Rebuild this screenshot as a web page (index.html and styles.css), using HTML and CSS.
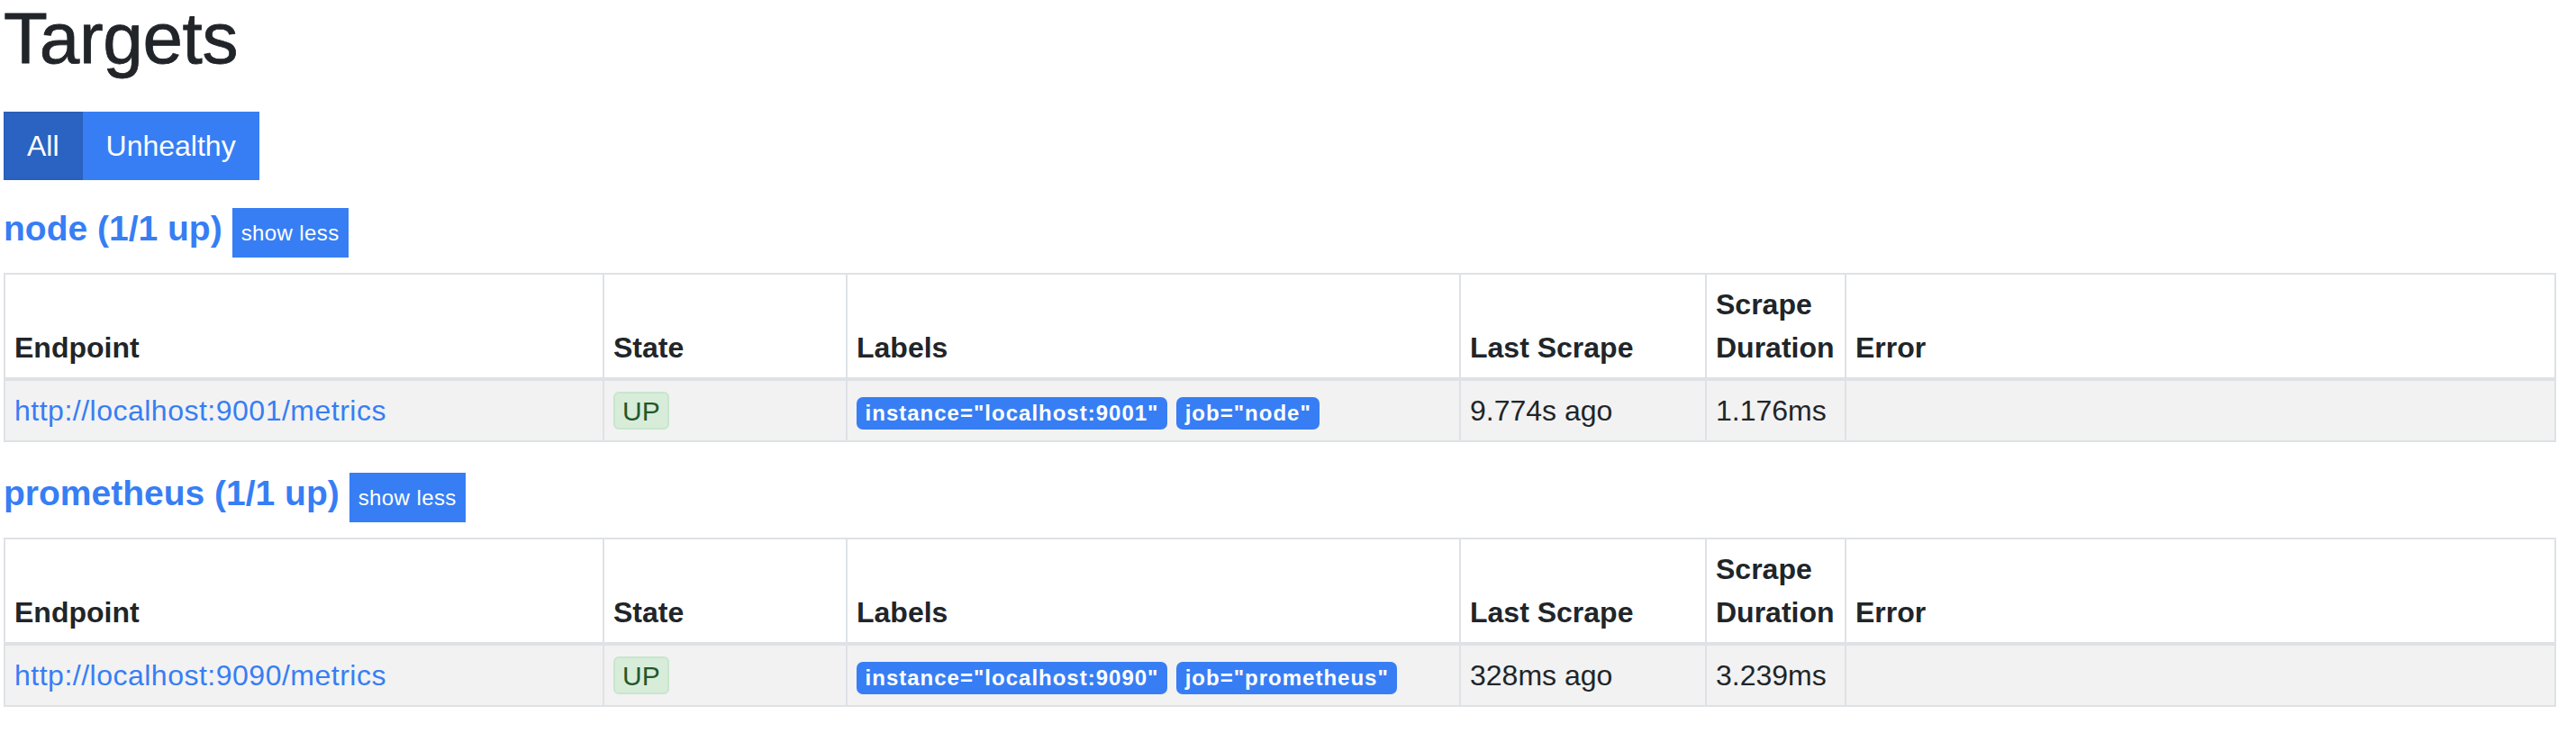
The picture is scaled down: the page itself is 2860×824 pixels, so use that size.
FILE: index.html
```html
<!DOCTYPE html>
<html lang="en">
<head>
<meta charset="utf-8">
<title>Targets</title>
<link rel="stylesheet" href="styles.css">
</head>
<body>
<div class="page">
  <h1 class="title">Targets</h1>
  <div class="filter">
    <button class="fbtn active">All</button><button class="fbtn">Unhealthy</button>
  </div>

  <section class="job">
    <div class="job-head">
      <a class="job-name" href="#">node (1/1 up)</a>
      <button class="toggle">show less</button>
    </div>
    <table class="targets">
      <thead>
        <tr>
          <th class="c-endpoint">Endpoint</th>
          <th class="c-state">State</th>
          <th class="c-labels">Labels</th>
          <th class="c-last">Last Scrape</th>
          <th class="c-dur">Scrape Duration</th>
          <th class="c-err">Error</th>
        </tr>
      </thead>
      <tbody>
        <tr>
          <td><a class="endpoint" href="#">http://localhost:9001/metrics</a></td>
          <td><span class="state-up">UP</span></td>
          <td><span class="label">instance="localhost:9001"</span><span class="label">job="node"</span></td>
          <td>9.774s ago</td>
          <td>1.176ms</td>
          <td></td>
        </tr>
      </tbody>
    </table>
  </section>

  <section class="job">
    <div class="job-head">
      <a class="job-name" href="#">prometheus (1/1 up)</a>
      <button class="toggle">show less</button>
    </div>
    <table class="targets">
      <thead>
        <tr>
          <th class="c-endpoint">Endpoint</th>
          <th class="c-state">State</th>
          <th class="c-labels">Labels</th>
          <th class="c-last">Last Scrape</th>
          <th class="c-dur">Scrape Duration</th>
          <th class="c-err">Error</th>
        </tr>
      </thead>
      <tbody>
        <tr>
          <td><a class="endpoint" href="#">http://localhost:9090/metrics</a></td>
          <td><span class="state-up">UP</span></td>
          <td><span class="label">instance="localhost:9090"</span><span class="label">job="prometheus"</span></td>
          <td>328ms ago</td>
          <td>3.239ms</td>
          <td></td>
        </tr>
      </tbody>
    </table>
  </section>
</div>
</body>
</html>
```

FILE: styles.css
```css
* { box-sizing: border-box; }

html, body {
  margin: 0;
  padding: 0;
  background: #ffffff;
}

body {
  font-family: "Liberation Sans", Arial, Helvetica, sans-serif;
  font-size: 32px;
  line-height: 1.5;
  color: #212529;
}

.page {
  padding: 3px 22px 0 4px;
}

.title {
  margin: 0 0 41px 0;
  font-size: 80px;
  font-weight: 400;
  line-height: 80px;
  letter-spacing: -0.3px;
  color: #212529;
  -webkit-text-stroke: 0.8px #212529;
}

.filter {
  display: flex;
  margin-bottom: 31px;
}

.fbtn {
  font-family: inherit;
  font-size: 32px;
  line-height: 48px;
  padding: 12px 24px;
  border: 2px solid #377ef4;
  background: #377ef4;
  color: #ffffff;
  border-radius: 0;
  margin: 0;
}

.fbtn.active {
  background: #2a63c1;
  border-color: #2a60bb;
}

.job {
  margin-bottom: 34px;
}

.job-head {
  display: flex;
  align-items: baseline;
  gap: 11px;
  margin-bottom: 17px;
}

.job-name {
  font-size: 39px;
  line-height: 39px;
  font-weight: 700;
  color: #377ef4;
  text-decoration: none;
}

.toggle {
  font-family: inherit;
  font-size: 24px;
  line-height: 36px;
  letter-spacing: 0.4px;
  padding: 9.5px 10px;
  border: 0;
  border-radius: 0;
  background: #377ef4;
  color: #ffffff;
}

.targets {
  width: 100%;
  border-collapse: collapse;
  table-layout: fixed;
  border: 2px solid #dee2e6;
}

.targets th,
.targets td {
  border: 2px solid #dee2e6;
  padding: 9px 10px;
  text-align: left;
}

.targets th {
  vertical-align: bottom;
  font-weight: 700;
  border-bottom: 4px solid #dee2e6;
}

.targets td {
  vertical-align: top;
  background: #f2f2f2;
}

.c-endpoint { width: 665px; }
.c-state { width: 270px; }
.c-labels { width: 681px; }
.c-last { width: 273px; }
.c-dur { width: 155px; }

.endpoint {
  color: #377ef4;
  text-decoration: none;
  letter-spacing: 0.5px;
}

.state-up {
  display: inline-block;
  font-size: 30px;
  line-height: 30px;
  padding: 5.5px 8px 2.5px 8px;
  border: 2px solid #c8e6cc;
  border-radius: 6px;
  background: #d8ecda;
  color: #1f5a2b;
}

.label {
  display: inline-block;
  font-size: 24px;
  line-height: 1;
  font-weight: 700;
  letter-spacing: 1px;
  padding: 6px 9.6px;
  margin-right: 10px;
  border-radius: 7px;
  background: #377ef4;
  color: #ffffff;
  white-space: nowrap;
}
```
